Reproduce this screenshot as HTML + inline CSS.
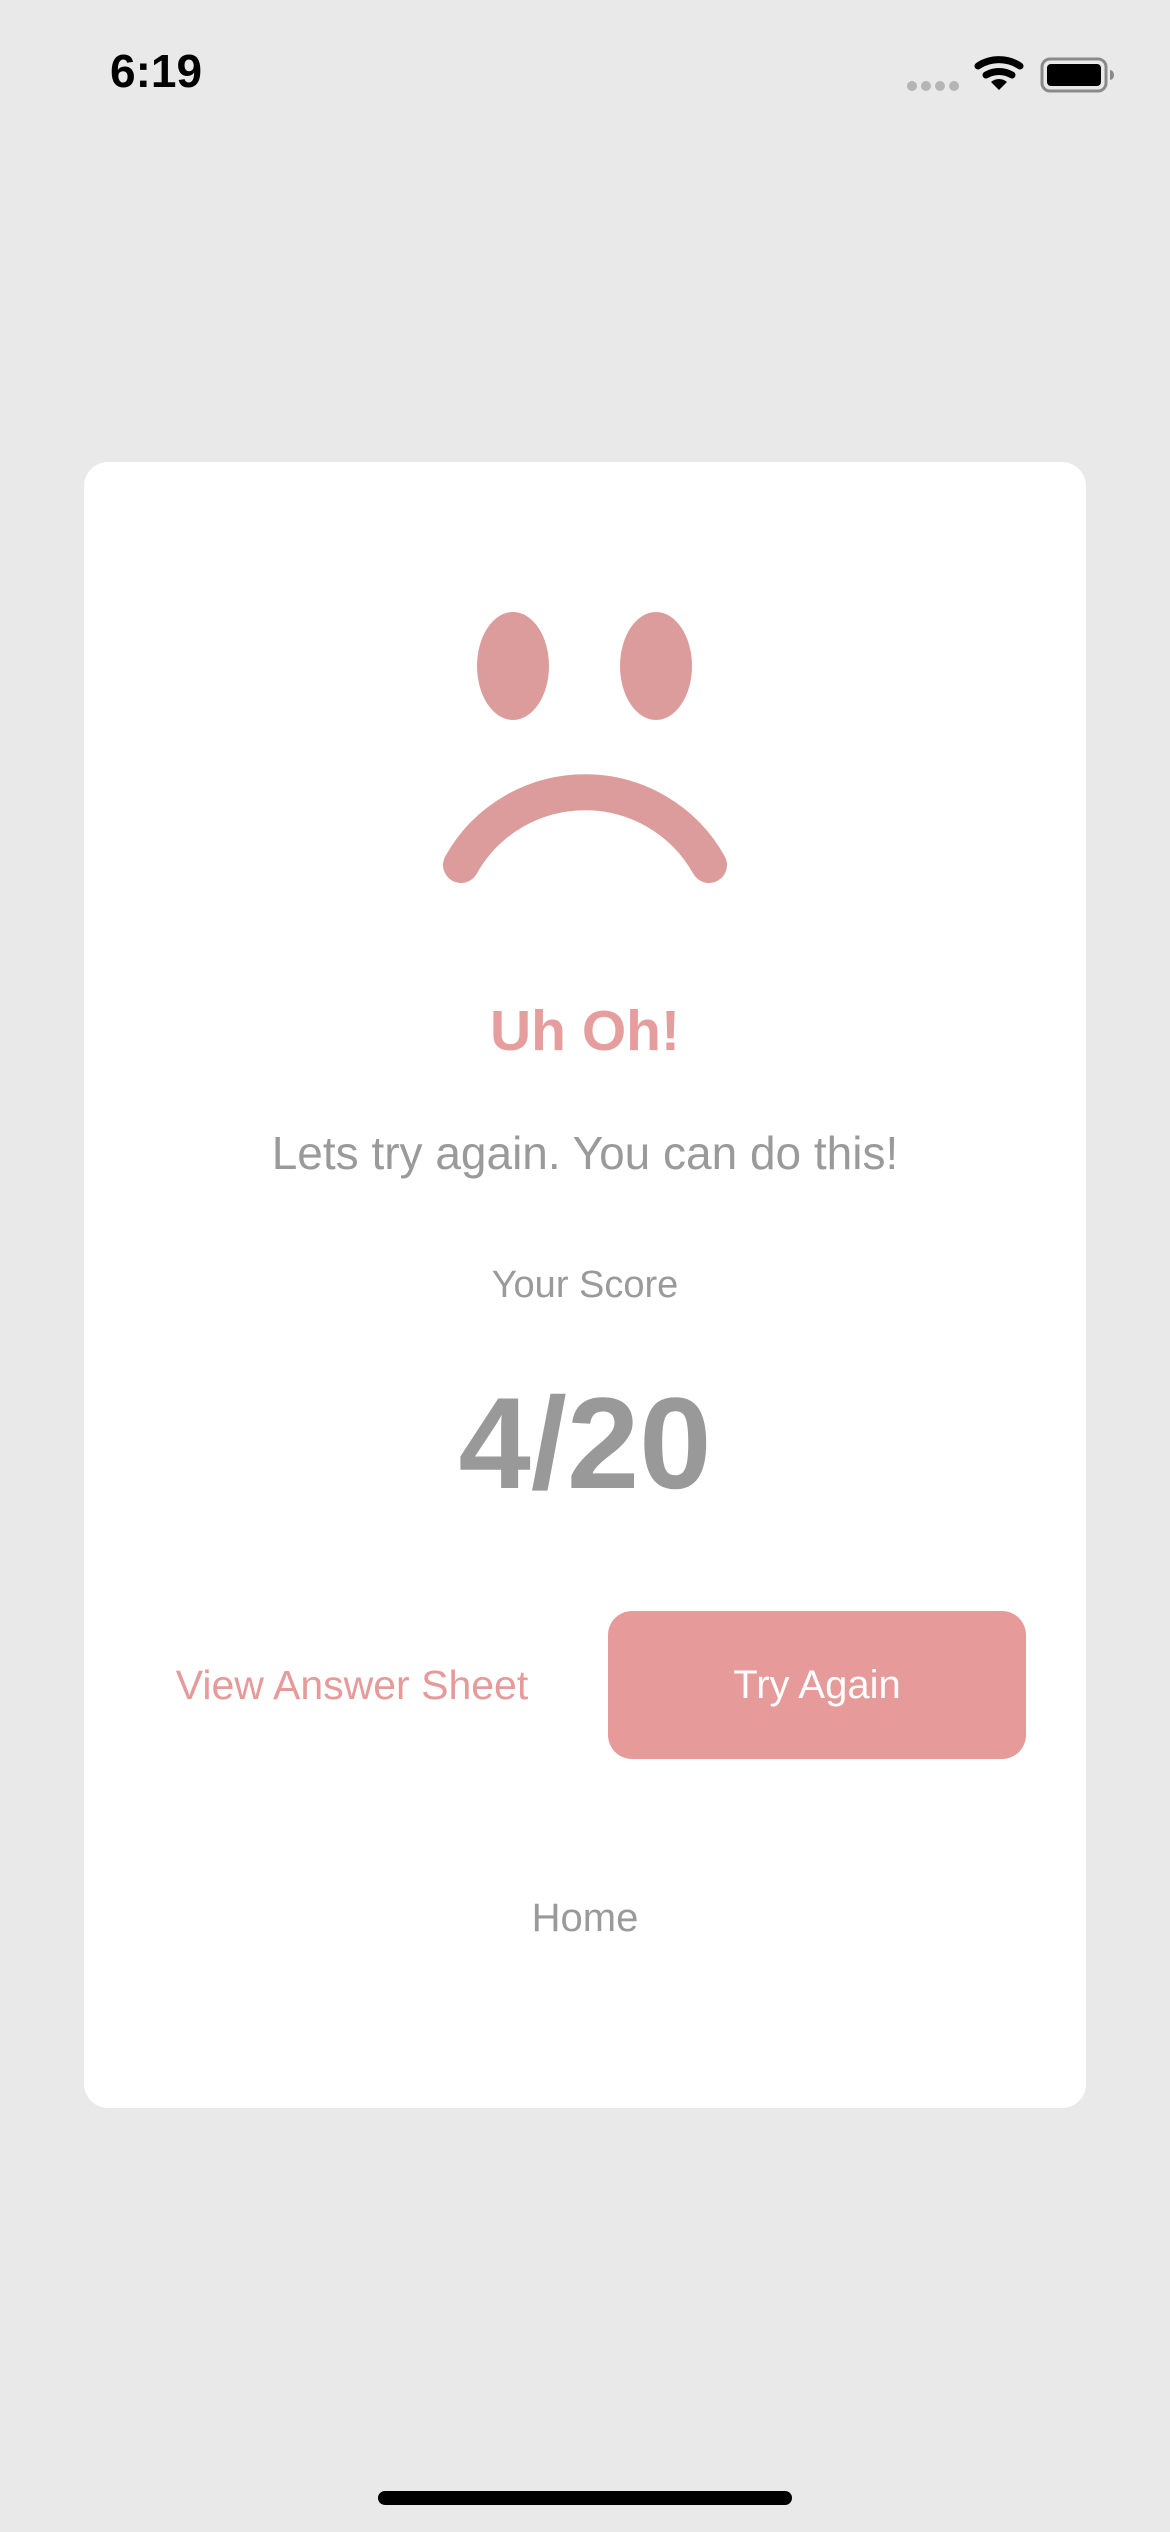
<!DOCTYPE html>
<html><head><meta charset="utf-8"><style>
html,body{margin:0;padding:0}
body{width:1170px;height:2532px;background:#e9e9e9;position:relative;overflow:hidden;font-family:"Liberation Sans",sans-serif}
.card{position:absolute;left:84px;top:462px;width:1002px;height:1646px;background:#fff;border-radius:24px}
.t{position:absolute;left:0;width:1170px;text-align:center;white-space:nowrap}
</style></head><body>
<div class="t" style="left:110px;width:auto;top:44px;font-size:46px;font-weight:bold;color:#000;text-align:left">6:19</div>
<svg style="position:absolute;left:0;top:0" width="1170" height="120">
<g fill="#b5b5b5"><circle cx="912" cy="86" r="5"/><circle cx="926" cy="86" r="5"/><circle cx="940" cy="86" r="5"/><circle cx="954" cy="86" r="5"/></g>
<g fill="none" stroke="#000" stroke-width="7" stroke-linecap="round">
<path d="M978 66 A38 38 0 0 1 1020 66"/><path d="M986 75 A26 26 0 0 1 1012 75"/></g>
<path d="M991 82 L999 90 L1007 82 A12 12 0 0 0 991 82Z" fill="#000"/>
<rect x="1042" y="59" width="64" height="32" rx="8" fill="none" stroke="#8a8a8a" stroke-width="3"/>
<rect x="1047" y="64" width="54" height="22" rx="4" fill="#000"/>
<path d="M1110 70 a4 5 0 0 1 0 10z" fill="#8a8a8a"/>
</svg>
<div class="card"></div>
<svg style="position:absolute;left:0;top:0" width="1170" height="1000">
<ellipse cx="513" cy="666" rx="36" ry="54" fill="#dc9c9c"/>
<ellipse cx="656" cy="666" rx="36" ry="54" fill="#dc9c9c"/>
<path d="M461 865 A142 142 0 0 1 709 865" fill="none" stroke="#dc9c9c" stroke-width="36" stroke-linecap="round"/>
</svg>
<div class="t" style="top:998px;font-size:57px;font-weight:bold;color:#e59d9d">Uh Oh!</div>
<div class="t" style="top:1126px;font-size:46px;color:#9a9a9a">Lets try again. You can do this!</div>
<div class="t" style="top:1264px;font-size:38px;color:#9a9a9a">Your Score</div>
<div class="t" style="top:1368px;font-size:130px;font-weight:bold;color:#999">4/20</div>
<div class="t" style="left:152px;width:400px;top:1662px;font-size:41px;color:#e79a9a">View Answer Sheet</div>
<div style="position:absolute;left:608px;top:1611px;width:418px;height:148px;background:#e79a9a;border-radius:24px;color:#fff;font-size:40px;text-align:center;line-height:148px">Try Again</div>
<div class="t" style="top:1896px;font-size:40px;color:#9a9a9a">Home</div>
<div style="position:absolute;left:378px;top:2491px;width:414px;height:14px;border-radius:7px;background:#000"></div>
</body></html>
